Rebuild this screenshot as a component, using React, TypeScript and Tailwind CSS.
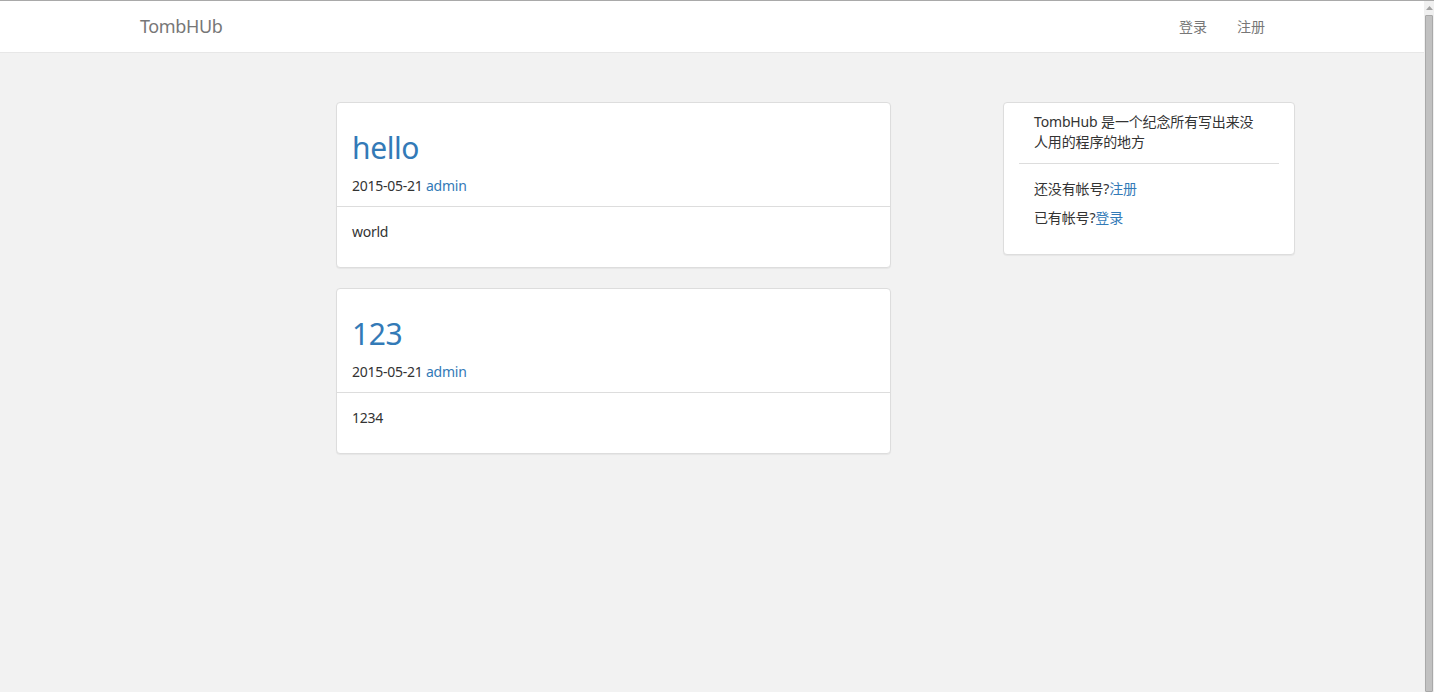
import React from 'react';

const posts = [
  { title: 'hello', date: '2015-05-21', author: 'admin', body: 'world' },
  { title: '123', date: '2015-05-21', author: 'admin', body: '1234' },
];

const font = "font-['Noto_Sans','Noto_Sans_CJK_SC',sans-serif]";

const PostCard: React.FC<{ title: string; date: string; author: string; body: string }> = ({ title, date, author, body }) => (
  <div className="mb-[20px] rounded-[4px] border border-[#dddddd] bg-white shadow-[0_1px_1px_rgba(0,0,0,0.05)]">
    <div className="border-b border-[#dddddd] px-[15px] pt-[28px] pb-[10px]">
      <a href="#" className="block text-[30px] leading-[33px] tracking-[-0.4px] text-[#337ab7]">{title}</a>
      <div className="mt-[12px] text-[14px] leading-[20px] tracking-[-0.25px] text-[#333333]">
        {date} <a href="#" className="text-[#337ab7]">{author}</a>
      </div>
    </div>
    <div className="px-[15px] pt-[15px] pb-[25px] text-[14px] leading-[20px] tracking-[-0.25px] text-[#333333]">{body}</div>
  </div>
);

export default function App() {
  return (
    <div className={`${font} flex h-[692px] overflow-hidden border-t border-[#a9a9a9] bg-[#f2f2f2]`}>
      <div className="flex-1">
        <nav className="h-[52px] border-b border-[#e7e7e7] bg-white">
          <div className="mx-auto flex h-full w-[1170px] items-center justify-between pr-[17px]">
            <a href="#" className="pl-[13px] text-[18px] tracking-[-0.4px] text-[#777777]">TombHUb</a>
            <div className="flex text-[14px] text-[#777777]">
              <a href="#" className="px-[15px]">登录</a>
              <a href="#" className="px-[15px]">注册</a>
            </div>
          </div>
        </nav>

        <div className="mx-auto flex w-[1170px] items-start pt-[49px] pl-[209px]">
          <div className="w-[555px]">
            {posts.map((p) => (
              <PostCard key={p.title} {...p} />
            ))}
          </div>

          <div className="ml-[112px] w-[292px] rounded-[4px] border border-[#dddddd] bg-white pt-[9px] pb-[26px] text-[14px] leading-[20px] tracking-[-0.15px] text-[#333333] shadow-[0_1px_1px_rgba(0,0,0,0.05)]">
            <p className="px-[30px]">TombHub 是一个纪念所有写出来没人用的程序的地方</p>
            <div className="mx-[15px] mt-[11px] mb-[15px] border-t border-[#dddddd]" />
            <p className="px-[30px]">
              还没有帐号?<a href="#" className="text-[#337ab7]">注册</a>
            </p>
            <p className="mt-[9px] px-[30px]">
              已有帐号?<a href="#" className="text-[#337ab7]">登录</a>
            </p>
          </div>
        </div>
      </div>

      <div className="flex w-[10px] flex-col bg-[#f0f0f0]">
        <div className="flex h-[14px] items-center justify-center">
          <svg width="7" height="4" viewBox="0 0 7 4">
            <polygon points="3.5,0 7,4 0,4" fill="#a3a3a3" />
          </svg>
        </div>
        <div className="mx-[1px] flex-1 rounded-[1px] border border-[#a9a9a9] bg-[#c1c1c1]" />
      </div>
    </div>
  );
}
